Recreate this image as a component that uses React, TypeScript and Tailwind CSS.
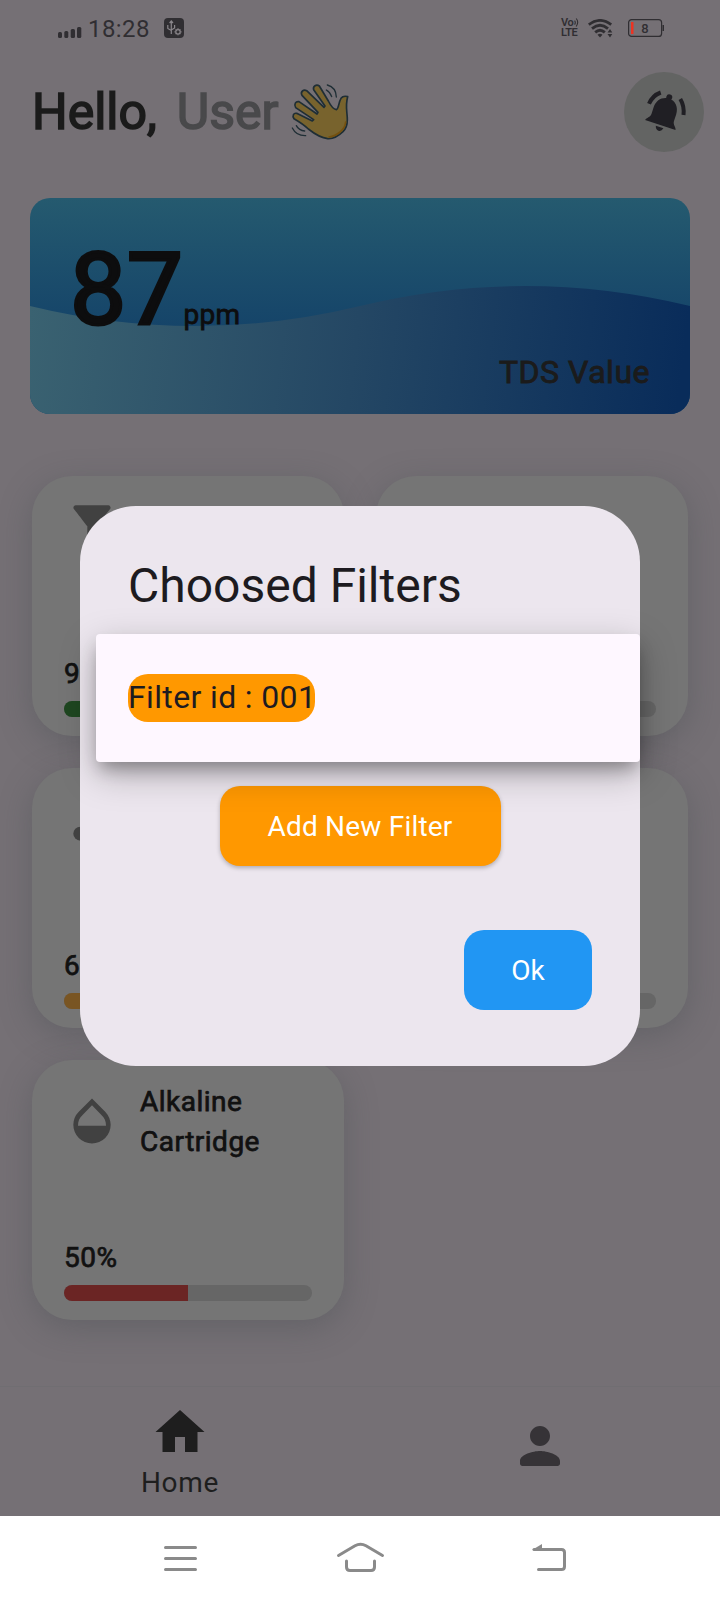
import type { ReactNode } from "react";
import { MdFilterAlt, MdOpacity, MdScatterPlot } from "react-icons/md";

function StatusBar() {
  return (
    <div className="flex h-14 shrink-0 items-center pl-[58px] pr-14 text-[#302e32]">
      <svg className="mt-[9px] h-[11px] w-6" viewBox="0 0 24 11" fill="currentColor">
        <rect x="0" y="5" width="4" height="6" rx="1.5" />
        <rect x="6.3" y="4" width="4" height="7" rx="1.5" />
        <rect x="12.7" y="2" width="4.3" height="9" rx="1.5" />
        <rect x="19" y="0" width="4.3" height="11" rx="1.5" />
      </svg>
      <span className="mt-[2px] ml-[6px] text-2xl leading-none tracking-[0.4px]">18:28</span>
      <svg className="ml-[14px] h-5 w-5" viewBox="0 0 20 20">
        <rect width="20" height="20" rx="4" fill="#302e32" />
        <g stroke="#8a868b" strokeWidth="1.2" fill="none">
          <path d="M7.3 3.5V16M3.8 7v3.4l3.5 2M10.6 7v3l-3.3 2M5.6 5l1.7-2 1.7 2" />
          <circle cx="14" cy="13.8" r="2.2" />
          <path d="M14 10.3v1M14 16.3v1M10.5 13.8h1M16.5 13.8h1M11.6 11.4l.7.7M15.7 15.5l.7.7M16.4 11.4l-.7.7M12.3 15.5l-.7.7" />
        </g>
      </svg>
      <div className="grow" />
      <div className="relative w-[18px] text-[11px] leading-[10px] font-semibold tracking-[-0.5px] whitespace-nowrap">
        Vo
        <br />
        LTE
        <svg className="absolute top-0 left-[13px] h-[9px] w-[5px]" viewBox="0 0 5 9" fill="none" stroke="currentColor" strokeWidth="1.1">
          <path d="M.6 2.6q1.400 2 0 4M2.200 .5q3 3.400 0 8" />
        </svg>
      </div>
      <svg className="ml-[9px] h-[19px] w-[25px]" viewBox="0 0 25 19" fill="none" stroke="currentColor" strokeWidth="2.8">
        <path d="M.8 5.6Q12 -2.8 23.2 5.6M4 9.6Q12 3 20 9.600M7.2 13.4Q12 9.2 16.800 13.4" />
        <path d="M9.500 15.7Q12 13.700 14.500 15.700L12 18.500z" fill="currentColor" stroke="none" />
        <path d="M19.500 13.500L22 10l2.300 3.500zM19.500 15L22 18.500l2.300-3.500z" fill="currentColor" stroke="none" />
      </svg>
      <svg className="ml-[15px] h-[18px] w-9" viewBox="0 0 36 18">
        <rect x=".6" y=".6" width="33" height="16.800" rx="3" fill="none" stroke="#302e32" strokeWidth="1.200" />
        <rect x="3" y="3" width="2.500" height="12" fill="#ec3323" />
        <rect x="34.500" y="6" width="1.500" height="6" fill="#302e32" />
        <text x="17" y="14" textAnchor="middle" fontSize="13" fontWeight="500" fill="#302e32">8</text>
      </svg>
    </div>
  );
}

function WavingHand() {
  return (
    <svg className="ml-[11px] h-[58px] w-[60px]" viewBox="865 248 180 174" fill="none" stroke="#1f2e35" strokeWidth="5" strokeLinecap="round" strokeLinejoin="round">
      <path
        fill="#78632d"
        d="M1038 289C1030 318 1037 335 1037 358C1037 375 1031 387 1024 394C1005 412 990 416 978 415C960 413 943 404 920 386C908 374 896 366 877 355C871 346 876 337 885 339L932 362L936 358L882 322C876 312 882 302 892 304L946 341L949 336L901 285C895 274 906 266 915 271L967 321L970 317L936 268C933 258 944 250 953 257L980 302C988 318 997 327 1004 328C1012 325 1010 307 1018 294C1024 286 1031 287 1038 289Z"
      />
      <path stroke="#74500f" strokeWidth="5" d="M1032 365C1030 388 1006 407 982 410" />
      <path strokeWidth="4" d="M977 254Q1003 261 1004 290M974 269Q986 276 990 289M872 383Q884 407 912 406M884 376Q892 391 909 392" />
    </svg>
  );
}

function Bell() {
  return (
    <div className="flex h-20 w-20 items-center justify-center rounded-full bg-[#636463]">
      <svg className="h-20 w-20" viewBox="0 0 80 80" fill="#201f24">
        <g transform="translate(36.300 53) rotate(18)">
          <circle cx="0" cy="-29" r="3" />
          <path d="M-16 0C-15.500 -3 -11.800 -4 -11.800 -8V-15C-11.800 -22.500 -7 -27.500 0 -28C7 -27.500 11.800 -22.500 11.800 -15V-8C11.800 -4 15.500 -3 16 0Z" />
          <path d="M-4 2.200H4Q3 6 0 6T-4 2.200Z" />
        </g>
        <path d="M36.700 20.500Q28.500 23.500 25 31.800M56.300 27Q60.500 34 59.500 43" fill="none" stroke="#201f24" strokeWidth="4" />
      </svg>
    </div>
  );
}

function TdsCard() {
  return (
    <div className="relative mx-[30px] mt-[46px] h-[216px] shrink-0 overflow-hidden rounded-[20px] bg-gradient-to-b from-[#255a6f] to-[#154469] to-60%">
      <svg className="absolute inset-0 h-full w-full" viewBox="0 0 660 216">
        <defs>
          <linearGradient id="wave" gradientUnits="userSpaceOnUse" x1="0" y1="108" x2="650" y2="190">
            <stop offset="0" stopColor="#3a6271" />
            <stop offset="0.500" stopColor="#244764" />
            <stop offset="1" stopColor="#092c5a" />
          </linearGradient>
        </defs>
        <path d="M0 108Q165 148 330 108T660 108V216H0Z" fill="url(#wave)" />
      </svg>
      <div className="relative flex items-baseline pt-8 pl-10 text-[#0d0d0e]">
        <span className="text-[100px] leading-[120px] tracking-[0.5px] [-webkit-text-stroke:3.100px]">87</span>
        <span className="text-[28px] leading-none tracking-[0.3px] [-webkit-text-stroke:0.800px]">ppm</span>
      </div>
      <div className="relative mt-[2px] pr-10 text-right text-[32px] leading-[40px] tracking-[0.5px] text-[#1b1b1b] [-webkit-text-stroke:0.900px]">TDS Value</div>
    </div>
  );
}

type FilterCardProps = {
  icon?: ReactNode;
  title?: string;
  percent?: string;
  fill?: string;
};

function FilterCard({ icon, title, percent, fill }: FilterCardProps) {
  return (
    <div className="flex h-[260px] flex-col rounded-[40px] bg-[#757575] px-8 pt-[18px] pb-[19px] shadow-[0_8px_32px_rgba(75,78,84,0.42)]">
      <div className="flex h-[88px] items-center text-[#414141]">
        <div className="-mt-[2px] h-14 w-14">{icon}</div>
        <div className="ml-5 w-[150px] text-[28px] leading-10 tracking-[0.5px] text-[#111] [-webkit-text-stroke:0.750px]">{title}</div>
      </div>
      <div className="mt-auto h-[43px] text-[28px] leading-8 tracking-[0.5px] text-[#111] [-webkit-text-stroke:0.750px]">{percent}</div>
      <div className="h-4 overflow-hidden rounded-full bg-[#666]">
        <div className={`h-full w-1/2 ${fill ?? ""}`} />
      </div>
    </div>
  );
}

function BottomNav() {
  return (
    <div className="mt-auto grid h-[130px] shrink-0 grid-cols-2 border-t border-[#706e72]">
      <div className="flex flex-col items-center pt-[15px] text-[#1e1e1e]">
        <svg className="h-[60px] w-[60px]" viewBox="0 0 24 24" fill="currentColor">
          <path d="M10 20v-6h4v6h5v-8h2.800L12 3.200 2.200 12h2.800v8z" />
        </svg>
        <span className="mt-[3px] text-[28px] leading-9 tracking-[0.7px]">Home</span>
      </div>
      <div className="flex justify-center pt-[29px] text-[#363337]">
        <svg className="h-[60px] w-[60px]" viewBox="0 0 24 24" fill="currentColor">
          <path d="M12 12c2.210 0 4-1.790 4-4s-1.790-4-4-4-4 1.790-4 4 1.790 4 4 4zm0 2c-2.670 0-8 1.340-8 4v1c0 .550.450 1 1 1h14c.550 0 1-.450 1-1v-1c0-2.660-5.330-4-8-4z" />
        </svg>
      </div>
    </div>
  );
}

function SystemBar() {
  return (
    <div className="h-[84px] shrink-0 bg-white">
      <svg className="h-[84px] w-[720px]" viewBox="0 0 720 84" fill="none" stroke="#8a8a8a" strokeWidth="3" strokeLinecap="round" strokeLinejoin="round">
        <path d="M165.500 31.500H195.500M165.500 42.500H195.500M165.500 53.500H195.500" />
        <path d="M338.500 39.500L355 29.800Q360.500 26.500 366 29.800L382.500 39.500M346.500 45V51Q346.500 54.500 350 54.500H371Q374.500 54.500 374.500 51V45" />
        <path d="M534 33.500H561.500Q564.500 33.500 564.500 36.500V50.500Q564.500 53.500 561.500 53.500H538.500" />
        <path d="M532 34L542 28V34Z" fill="#8a8a8a" stroke="none" />
      </svg>
    </div>
  );
}

function FilterDialog() {
  return (
    <div className="absolute top-[506px] left-20 flex h-[560px] w-[560px] flex-col rounded-[56px] bg-[#ece6ee] text-[#1d1b20]">
      <h2 className="pt-[51px] pl-12 text-[48px] leading-[58px]">Choosed Filters</h2>
      <div className="relative z-10 mt-[19px] ml-4 flex h-32 shrink-0 items-center rounded bg-[#fef7ff] pl-8 shadow-[0_10px_16px_-4px_rgba(0,0,0,0.3),0_12px_36px_rgba(0,0,0,0.26)]">
        <div className="flex h-12 w-[187px] items-center rounded-[20px] bg-[#ff9800] pb-[2px] text-[32px] tracking-[0.36px] whitespace-nowrap">Filter id : 001</div>
      </div>
      <button className="mt-6 h-20 w-[281px] shrink-0 self-center rounded-[20px] bg-[#ff9800] pt-[2px] text-[28px] tracking-[0.2px] text-white shadow-[0_2px_4px_rgba(0,0,0,0.25)]">Add New Filter</button>
      <button className="mt-16 mr-12 h-20 w-32 shrink-0 self-end rounded-[20px] bg-[#2196f3] pt-[2px] text-[28px] text-white">Ok</button>
    </div>
  );
}

export default function App() {
  return (
    <div className="relative flex h-[1600px] w-[720px] flex-col overflow-hidden bg-[#757075] font-[Roboto,sans-serif]">
      <StatusBar />
      <header className="mt-4 flex h-20 shrink-0 items-center pr-4 pl-8 text-[50px] leading-none [-webkit-text-stroke:1.600px]">
        <span className="text-[#1b1b1b]">Hello,</span>
        <span className="ml-5 text-[#49494b]">User</span>
        <WavingHand />
        <div className="grow" />
        <Bell />
      </header>
      <TdsCard />
      <main className="mx-8 mt-[62px] grid shrink-0 grid-cols-2 gap-8">
        <FilterCard icon={<MdFilterAlt className="-mt-[13px] h-14 w-14" />} percent="90%" fill="bg-[#1e4620]" />
        <FilterCard title="Sediment" percent="" />
        <FilterCard icon={<MdScatterPlot className="h-14 w-14" />} percent="60%" fill="bg-[#795523]" />
        <FilterCard />
        <FilterCard icon={<MdOpacity className="h-14 w-14" />} title="Alkaline Cartridge" percent="50%" fill="bg-[#6b2524]" />
      </main>
      <BottomNav />
      <SystemBar />
      <FilterDialog />
    </div>
  );
}
